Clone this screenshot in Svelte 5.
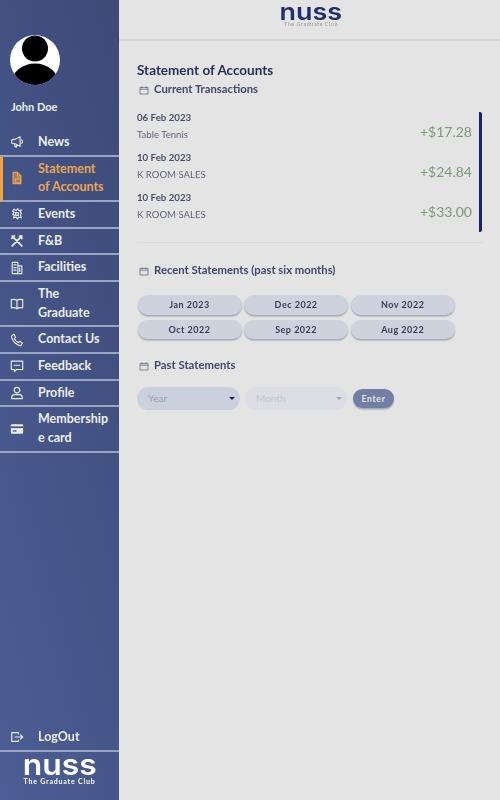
<script>
	const nav = [
		{ label: 'News', icon: 'news' },
		{ label: 'Statement of Accounts', icon: 'doc', active: true, tall: true },
		{ label: 'Events', icon: 'events' },
		{ label: 'F&B', icon: 'food' },
		{ label: 'Facilities', icon: 'building' },
		{ label: 'The Graduate', icon: 'book', tall: true },
		{ label: 'Contact Us', icon: 'phone' },
		{ label: 'Feedback', icon: 'chat' },
		{ label: 'Profile', icon: 'user' },
		{ label: 'Membership e card', icon: 'card', tall: true }
	];

	const paths = {
		news: 'M2 6.500c0-1 .7-1.500 1.500-1.500H6l5.500-3v11L6 10H3.500C2.700 10 2 9.500 2 8.500zM5 10l.8 3.500h2L7 10.500M13.500 5.500c.8 1 .8 3 0 4',
		doc: 'M3.500 1.500h5l4 4v9h-9zM8.500 1.500v4h4M6 9h6v4.500H6z',
		events: 'M4.500 2.500 3 5l2 1-2 2.500 2 1-1 3 3-1 1.500 2 1.500-2 3 1-1-3 1-2.500-1.500-1.500L13 3.500l-3 .5-1-2-2 2zM6.500 6.500h3v3h-3z',
		food: 'M2.500 2.500 13.500 13.500M13.500 2.500 2.500 13.500M2 5l3-3M11 2.500c1.500-.8 2.500.2 2.500 2.500',
		building: 'M2.500 14.500V1.500h6.500v13zM9 5.500h4.500v9H9zM4.500 4.500h2.500M4.500 7.500h2.500M4.500 10.500h2.500M11 8v4',
		book: 'M8 3.800C6.500 2.700 3.800 2.500 1.500 3v9.500c2.300-.5 5-.3 6.500 1 1.500-1.300 4.200-1.500 6.500-1V3c-2.300-.5-5-.3-6.500.8zM8 3.800v9.700',
		phone: 'M2.200 3 4.500 1.500l2 3.300L5 6.200c.8 2 2.500 3.900 4.600 4.800l1.500-1.500 3.100 2.200-1.500 2.300c-.5.500-1.200.6-2 .3C5.800 12.500 3 9.500 1.800 4.800c-.1-.7 0-1.400.4-1.800z',
		chat: 'M1.500 2.500h13v9.500H7.500L5 14.500V12H1.500zM4.800 7.200h1.400M7.300 7.200h1.400M9.800 7.200h1.400',
		user: 'M8 1.500a3.200 3.200 0 1 0 0 6.400 3.200 3.200 0 0 0 0-6.400zM2 14.500v-1.500c0-2 1.600-3.200 3.200-3.200h5.600c1.600 0 3.200 1.200 3.200 3.200v1.500z'
	};

	const recent = ['Jan 2023', 'Dec 2022', 'Nov 2022', 'Oct 2022', 'Sep 2022', 'Aug 2022'];

	const transactions = [
		{ date: '06 Feb 2023', name: 'Table Tennis', amount: '+$17.28' },
		{ date: '10 Feb 2023', name: 'K ROOM SALES', amount: '+$24.84' },
		{ date: '10 Feb 2023', name: 'K ROOM SALES', amount: '+$33.00' }
	];
</script>

{#snippet calendar()}
	<svg class="cal" viewBox="0 0 10 10" aria-hidden="true">
		<path d="M1 2.500h8v6.500H1zM1 4.200h8M3 1.300v1.500M7 1.300v1.500" fill="none" stroke="currentColor" stroke-width="0.8" />
	</svg>
{/snippet}

{#snippet logo(light)}
	<div class="logo" class:light>
		<span class="mark">nuss</span>
		<span class="club">The Graduate Club</span>
	</div>
{/snippet}

<div class="page">
	<aside class="sidebar">
		<svg class="avatar" viewBox="0 0 50 50" aria-hidden="true">
			<defs><clipPath id="round"><circle cx="25" cy="25" r="25" /></clipPath></defs>
			<circle cx="25" cy="25" r="25" fill="#fff" />
			<g clip-path="url(#round)">
				<circle cx="25" cy="13.500" r="13" fill="#000" />
				<ellipse cx="25" cy="47" rx="23" ry="18.500" fill="#000" />
			</g>
		</svg>
		<div class="user">John Doe</div>

		<nav>
			{#each nav as item}
				<div class="item" class:active={item.active} class:tall={item.tall}>
					{#if item.icon === 'card'}
						<svg class="icon" viewBox="0 0 16 16" aria-hidden="true">
							<rect x="1" y="2.500" width="14" height="11" rx="1.200" fill="currentColor" />
							<rect x="1" y="5" width="14" height="2" fill="#44527f" />
							<rect x="3" y="9.500" width="4.500" height="1.500" fill="#44527f" />
						</svg>
					{:else}
						<svg class="icon" class:filled={item.icon === 'doc'} viewBox="0 0 16 16" aria-hidden="true">
							<path d={paths[item.icon]} stroke="currentColor" stroke-width={item.icon === 'food' ? 2 : 1.300} stroke-linejoin="round" stroke-linecap="round" />
						</svg>
					{/if}
					<span>{item.label}</span>
				</div>
			{/each}
		</nav>

		<div class="foot">
			<div class="item logout">
				<svg class="icon" viewBox="0 0 16 16" aria-hidden="true">
					<path d="M9.500 4.500V3h-7.500v10h7.500v-1.500M6 8h8.500M12 5.500 14.500 8 12 10.500" fill="none" stroke="currentColor" stroke-width="1.300" stroke-linejoin="round" stroke-linecap="round" />
				</svg>
				<span>LogOut</span>
			</div>
			{@render logo(true)}
		</div>
	</aside>

	<main>
		<header>{@render logo(false)}</header>

		<section class="content">
			<h1>Statement of Accounts</h1>
			<h2 class="first">{@render calendar()}Current Transactions</h2>

			<div class="list">
				{#each transactions as t}
					<div class="tx">
						<div>
							<div class="date">{t.date}</div>
							<div class="name">{t.name}</div>
						</div>
						<div class="amount">{t.amount}</div>
					</div>
				{/each}
			</div>

			<hr />

			<h2>{@render calendar()}Recent Statements (past six months)</h2>
			<div class="months">
				{#each recent as m}
					<button>{m}</button>
				{/each}
			</div>

			<h2 class="past">{@render calendar()}Past Statements</h2>
			<div class="filters">
				<div class="select">Year<i></i></div>
				<div class="select off">Month<i></i></div>
				<button class="enter">Enter</button>
			</div>
		</section>
	</main>
</div>

<style>
	:global(body) {
		margin: 0;
		background: #e4e4e4;
	}

	.page {
		display: flex;
		width: 500px;
		height: 800px;
		overflow: hidden;
		font-family: Lato, 'Open Sans', sans-serif;
		filter: blur(0.35px);
	}

	.sidebar {
		display: flex;
		flex-direction: column;
		flex: 0 0 119px;
		background: linear-gradient(75deg, #4c5e95 0%, #3d4a78 100%);
		color: #eceef4;
	}

	.avatar {
		width: 50px;
		height: 50px;
		margin: 35px 0 0 10px;
	}

	.user {
		margin: 15px 0 0 11px;
		font-size: 11px;
		font-weight: 700;
		line-height: 14px;
	}

	nav {
		margin-top: 16px;
	}

	.item {
		display: flex;
		align-items: center;
		min-height: 24.600px;
		padding-left: 10px;
		border-bottom: 2px solid #9ba4c0;
		font-size: 12.500px;
		font-weight: 700;
		line-height: 18.500px;
	}

	.item.tall {
		padding-top: 3.250px;
		padding-bottom: 3.250px;
	}

	.item span {
		width: 71px;
		margin-left: 14px;
		overflow-wrap: anywhere;
	}

	.item.active {
		padding-left: 7px;
		border-left: 3px solid #eea83f;
		color: #eba550;
	}

	.icon {
		flex: none;
		width: 14px;
		height: 14px;
		fill: none;
	}

	.icon.filled {
		fill: rgba(235, 165, 80, 0.55);
	}

	.foot {
		margin-top: auto;
	}

	.logout {
		height: 26px;
		padding-top: 3px;
	}

	.logo {
		display: flex;
		flex-direction: column;
		align-items: center;
		color: #1f2f6e;
	}

	.logo.light {
		height: 48px;
		box-sizing: border-box;
		color: #fff;
	}

	.mark {
		display: block;
		font-family: Inter, sans-serif;
		font-weight: 600;
		font-size: 23px;
		line-height: 18px;
		transform: scaleX(1.170);
	}

	.light .mark {
		font-size: 29px;
		line-height: 25px;
		transform: scaleX(1.100);
	}

	.club {
		font-size: 5.500px;
		line-height: 7px;
		letter-spacing: 0.500px;
	}

	.light .club {
		font-size: 7px;
		line-height: 8px;
		font-weight: 700;
		letter-spacing: 0.800px;
	}

	header .club {
		color: #9a9a96;
	}

	main {
		flex: 1;
		min-width: 0;
	}

	header {
		display: flex;
		justify-content: center;
		box-sizing: border-box;
		height: 41px;
		padding: 3px 0 0 3px;
		border-bottom: 2px solid #d2d2d2;
	}

	.content {
		padding: 21px 17px 0 18px;
		color: #2b3560;
	}

	h1 {
		margin: 0;
		font-size: 13.500px;
		font-weight: 700;
		line-height: 16px;
		color: #282f5f;
	}

	h2 {
		display: flex;
		align-items: center;
		margin: 0;
		font-size: 11.300px;
		font-weight: 700;
		line-height: 14px;
		color: #3f4770;
	}

	h2.first {
		margin-top: 4px;
	}

	.cal {
		width: 10px;
		height: 10px;
		margin: 1px 5px 0 2px;
		color: #666c80;
	}

	.list {
		display: flex;
		flex-direction: column;
		margin: 16px 1px 10px 0;
		padding-right: 7px;
		border-right: 3px solid #1b2462;
		border-radius: 2px;
	}

	.tx {
		display: flex;
		align-items: flex-start;
		justify-content: space-between;
		height: 40px;
	}

	.date {
		font-size: 9.700px;
		font-weight: 700;
		line-height: 10px;
		color: #4a4f68;
	}

	.name {
		margin-top: 5.500px;
		font-size: 9.600px;
		line-height: 13px;
		color: #62667a;
	}

	.amount {
		margin-top: 10px;
		font-size: 14px;
		line-height: 20px;
		color: #7a9c74;
	}

	hr {
		margin: 0 0 20px;
		border: 0;
		border-top: 1px solid #dadada;
	}

	.months {
		display: grid;
		grid-template-columns: repeat(3, 104px);
		gap: 5px 2.600px;
		margin-top: 18px;
		padding-left: 0.500px;
	}

	button {
		height: 19.500px;
		padding: 0;
		border: 0;
		border-radius: 10px;
		background: #cdd2dc;
		box-shadow: 0 1.500px 1.500px #a3a7b0;
		font: 700 9px Lato, sans-serif;
		letter-spacing: 0.500px;
		color: #363e60;
	}

	h2.past {
		margin-top: 19px;
	}

	.filters {
		display: flex;
		align-items: center;
		margin-top: 15px;
	}

	.select {
		position: relative;
		box-sizing: border-box;
		width: 103px;
		height: 23px;
		padding-left: 11px;
		border-radius: 12px;
		background: #cbd1dc;
		font-size: 10px;
		line-height: 23px;
		color: #9ea3b2;
	}

	.select i {
		position: absolute;
		top: 10px;
		right: 5px;
		border: 3.500px solid transparent;
		border-top-color: #1b2462;
		border-bottom: 0;
	}

	.select.off {
		width: 102px;
		margin-left: 5px;
		background: #dcdee3;
		color: #c3c6cf;
	}

	.select.off i {
		border-top-color: #9ea3b2;
	}

	.enter {
		width: 41px;
		height: 19px;
		margin-left: 6px;
		background: #727fa4;
		color: #e4e6ee;
		font-weight: 700;
	}
</style>
